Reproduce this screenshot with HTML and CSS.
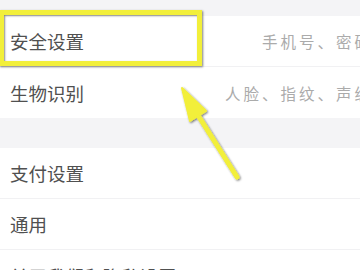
FILE: index.html
```html
<!DOCTYPE html>
<html lang="zh-CN">
<head>
    <meta charset="UTF-8">
    <title>设置</title>
    <link rel="stylesheet" href="styles.css">
</head>
<body>
    <div class="settings">
        <div class="group">
            <div class="row"><span class="label">安全设置</span><span class="value">手机号、密码</span></div>
            <div class="row"><span class="label">生物识别</span><span class="value">人脸、指纹、声纹</span></div>
        </div>
        <div class="group">
            <div class="row"><span class="label">支付设置</span></div>
            <div class="row"><span class="label">通用</span></div>
            <div class="row"><span class="label">关于我们和隐私设置</span></div>
        </div>
    </div>

    <div class="highlight-box"></div>
    <svg class="pointer" width="360" height="270" viewBox="0 0 360 270">
        <defs>
            <filter id="shade" x="-20%" y="-20%" width="140%" height="140%">
                <feDropShadow dx="1" dy="1" stdDeviation="1" flood-color="#000" flood-opacity="0.55"/>
            </filter>
        </defs>
        <g filter="url(#shade)">
            <line x1="237" y1="177" x2="189" y2="101" stroke="#f2ef3a" stroke-width="5" stroke-linecap="round"/>
            <polygon points="182,88 206,111 190,121" fill="#f2ef3a" stroke="#f2ef3a" stroke-width="2" stroke-linejoin="round"/>
        </g>
    </svg>
</body>
</html>
```

FILE: styles.css
```css
html, body {
    margin: 0;
    padding: 0;
    height: 100%;
    overflow: hidden;
}
body {
    background: #f4f4f6;
    font-family: "Noto Sans CJK SC", "Noto Sans", sans-serif;
    position: relative;
}
.settings {
    width: 390px;
    padding-top: 16px;
}
.group {
    background: #fff;
    margin-bottom: 30px;
}
.row {
    height: 51px;
    display: flex;
    align-items: center;
    justify-content: space-between;
    padding: 0 17px 0 10px;
    border-bottom: 1px solid #f1f1f3;
    box-sizing: border-box;
}
.row:last-child {
    border-bottom: none;
}
.label {
    font-size: 18.5px;
    color: #505050;
    white-space: nowrap;
}
.value {
    font-size: 15.5px;
    letter-spacing: 3px;
    color: #ababab;
    white-space: nowrap;
}
.highlight-box {
    position: absolute;
    left: -1px;
    top: 10px;
    width: 203px;
    height: 56px;
    box-sizing: border-box;
    border: 5px solid #f2ef3a;
    box-shadow: 1px 1px 2px rgba(0, 0, 0, 0.5), inset 1px 1px 2px rgba(0, 0, 0, 0.45);
}
.pointer {
    position: absolute;
    left: 0;
    top: 0;
}
```
